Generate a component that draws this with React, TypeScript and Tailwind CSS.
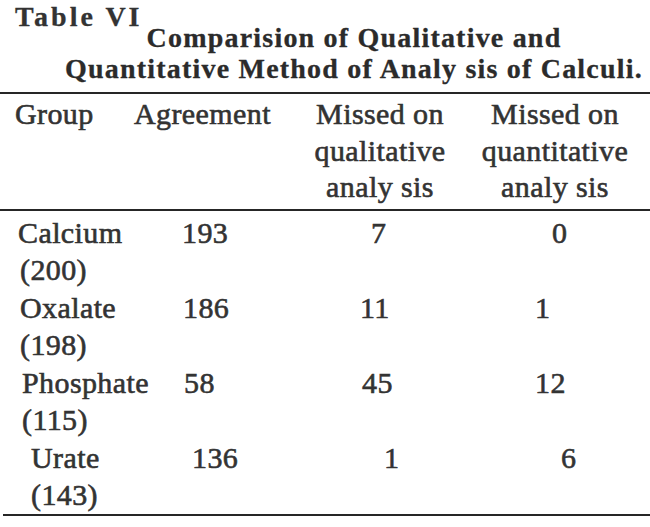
import React from "react";

type Row = {
  name: string;
  count: string;
  namePl: string;
  countPl: string;
  a: string;
  aPl: string;
  b: string;
  bPl: string;
  c: string;
  cPl: string;
};

const rows: Row[] = [
  { name: "Calcium", count: "(200)", namePl: "pl-[18px]", countPl: "pl-[20px]", a: "193", aPl: "pl-[52px]", b: "7", bPl: "pl-[71px]", c: "0", cPl: "pl-[92px]" },
  { name: "Oxalate", count: "(198)", namePl: "pl-[20px]", countPl: "pl-[20px]", a: "186", aPl: "pl-[53px]", b: "11", bPl: "pl-[60px]", c: "1", cPl: "pl-[75px]" },
  { name: "Phosphate", count: "(115)", namePl: "pl-[22px]", countPl: "pl-[22px]", a: "58", aPl: "pl-[54px]", b: "45", bPl: "pl-[62px]", c: "12", cPl: "pl-[75px]" },
  { name: "Urate", count: "(143)", namePl: "pl-[31px]", countPl: "pl-[31px]", a: "136", aPl: "pl-[62px]", b: "1", bPl: "pl-[84px]", c: "6", cPl: "pl-[101px]" },
];

export default function App() {
  return (
    <div className="w-[650px] h-[527px] bg-white overflow-hidden font-['Liberation_Serif',serif] text-[#333]">
      {/* Caption */}
      <div className="pl-[15px] pt-[12px] text-[28px] leading-[10px] font-bold tracking-[3px] text-[#333] [-webkit-text-stroke:0.3px_#333]">
        Table VI
      </div>
      <div className="pl-[63px] pr-[5px] text-center text-[28px] leading-[31px] font-bold tracking-[1.2px] text-[#2b2b2b] [-webkit-text-stroke:0.3px_#2b2b2b]">
        <div className="whitespace-nowrap">Comparision of Qualitative and</div>
        <div className="whitespace-nowrap">Quantitative Method of Analy sis of Calculi.</div>
      </div>

      {/* Top rule */}
      <div className="mt-[8px] h-[2px] bg-[#262626]" />

      {/* Header */}
      <div className="grid grid-cols-[130px_170px_160px_190px] pt-[2px] text-[30px] leading-[36.5px] tracking-[0.4px] whitespace-nowrap [-webkit-text-stroke:0.6px_#333]">
        <div className="pl-[15px]">Group</div>
        <div className="pl-[4px]">Agreement</div>
        <div className="flex flex-col items-center">
          <span>Missed on</span>
          <span>qualitative</span>
          <span>analy sis</span>
        </div>
        <div className="flex flex-col items-center">
          <span>Missed on</span>
          <span>quantitative</span>
          <span>analy sis</span>
        </div>
      </div>

      {/* Header rule */}
      <div className="mt-[3px] h-[2px] bg-[#262626]" />

      {/* Body */}
      <div className="pt-[3px] text-[30px] leading-[37.5px] tracking-[0.4px] whitespace-nowrap [-webkit-text-stroke:0.6px_#333]">
        {rows.map((r) => (
          <div key={r.name} className="grid grid-cols-[130px_170px_160px_190px]">
            <div className="flex flex-col">
              <span className={r.namePl}>{r.name}</span>
              <span className={r.countPl}>{r.count}</span>
            </div>
            <div className={r.aPl}>{r.a}</div>
            <div className={r.bPl}>{r.b}</div>
            <div className={r.cPl}>{r.c}</div>
          </div>
        ))}
      </div>

      {/* Bottom rule */}
      <div className="ml-[3px] h-[2px] bg-[#262626]" />
    </div>
  );
}
